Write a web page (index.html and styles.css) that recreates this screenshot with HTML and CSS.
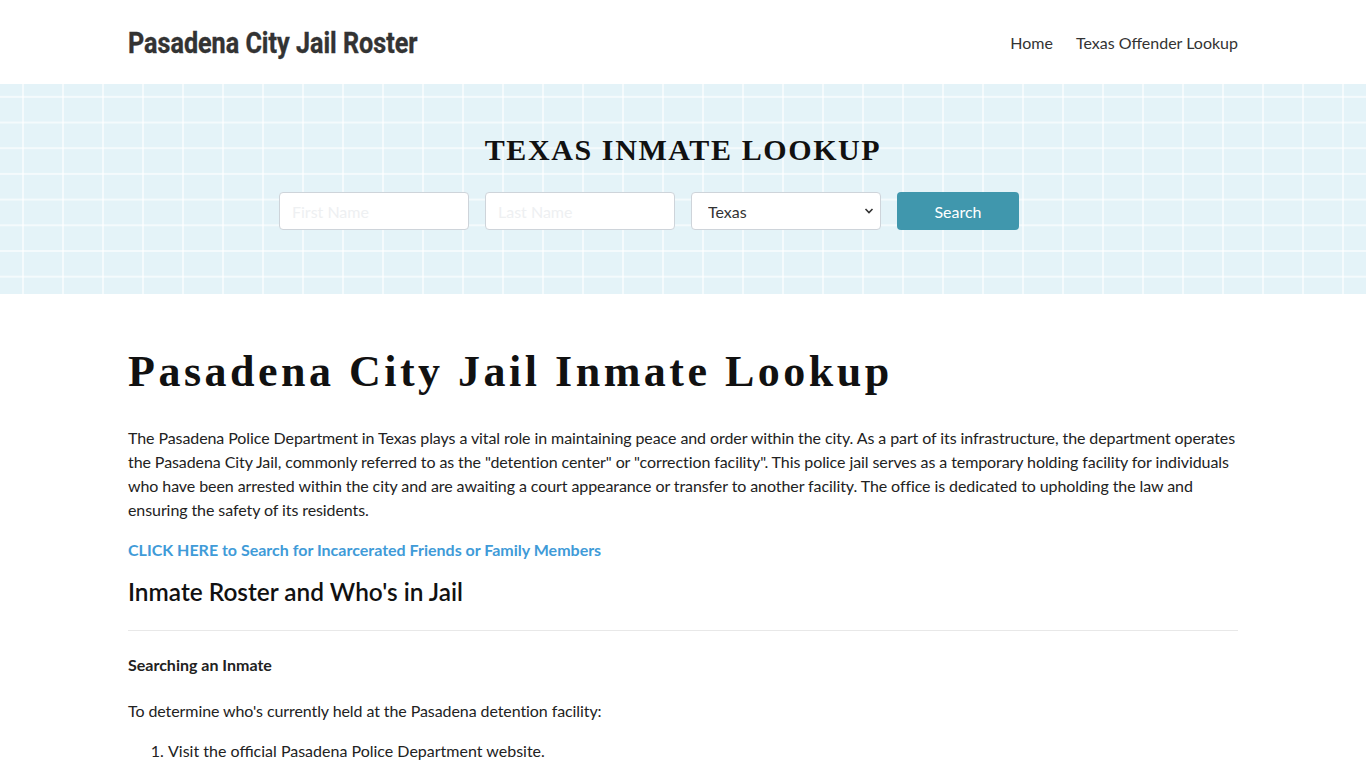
FILE: index.html
```
<!DOCTYPE html>
<html lang="en">
<head>
<meta charset="utf-8">
<title>Pasadena City Jail Roster</title>
<link rel="stylesheet" href="styles.css">
</head>
<body>
<header class="site-header">
  <div class="container header-inner">
    <a class="logo" href="#">Pasadena City Jail Roster</a>
    <nav class="nav">
      <a href="#">Home</a>
      <a href="#">Texas Offender Lookup</a>
    </nav>
  </div>
</header>
<section class="hero">
  <div class="container">
    <h2 class="hero-title">TEXAS INMATE LOOKUP</h2>
    <form class="search-form">
      <input type="text" class="field" placeholder="First Name">
      <input type="text" class="field" placeholder="Last Name">
      <select class="field select"><option>Texas</option></select>
      <button type="button" class="btn">Search</button>
    </form>
  </div>
</section>
<main class="container content">
  <h1 class="page-title">Pasadena City Jail Inmate Lookup</h1>
  <p class="body-text">The Pasadena Police Department in Texas plays a vital role in maintaining peace and order within the city. As a part of its infrastructure, the department operates the Pasadena City Jail, commonly referred to as the "detention center" or "correction facility". This police jail serves as a temporary holding facility for individuals who have been arrested within the city and are awaiting a court appearance or transfer to another facility. The office is dedicated to upholding the law and ensuring the safety of its residents.</p>
  <p><a class="cta" href="#">CLICK HERE to Search for Incarcerated Friends or Family Members</a></p>
  <h2 class="section-title">Inmate Roster and Who's in Jail</h2>
  <hr class="divider">
  <h3 class="sub-title">Searching an Inmate</h3>
  <p class="body-text">To determine who's currently held at the Pasadena detention facility:</p>
  <ol class="steps">
    <li>Visit the official Pasadena Police Department website.</li>
  </ol>
</main>
</body>
</html>
```

FILE: styles.css
```
* { box-sizing: border-box; }
body {
  margin: 0;
  font-family: Lato, "Open Sans", sans-serif;
  font-size: 16px;
  line-height: 24px;
  color: #222;
  background: #fff;
}
a { text-decoration: none; }
.container {
  width: 1110px;
  margin: 0 auto;
}
.site-header { height: 84px; background: #fff; }
.header-inner {
  height: 84px;
  display: flex;
  align-items: center;
  justify-content: space-between;
  padding-top: 2px;
}
.logo {
  display: inline-block;
  font-family: Roboto, "DejaVu Sans Condensed", sans-serif;
  font-weight: 700;
  font-size: 30px;
  line-height: 36px;
  color: #333;
  -webkit-text-stroke: 0.4px #333;
  transform: scaleX(0.838);
  transform-origin: left center;
}
.nav { display: flex; gap: 23px; }
.nav a { color: #333; font-size: 16px; }

.hero {
  height: 210px;
  background-color: #e4f3f8;
  background-image:
    linear-gradient(90deg, transparent 22px, rgba(255,255,255,0.6) 22px, rgba(255,255,255,0.6) 24px, transparent 24px),
    linear-gradient(180deg, transparent 12px, rgba(255,255,255,0.6) 12px, rgba(255,255,255,0.6) 14px, transparent 14px);
  background-size: 40px 100%, 100% 25.7px;
  background-position: 0 0, 0 0;
  padding-top: 48px;
}
.hero-title {
  margin: 0;
  text-align: center;
  font-family: "Liberation Serif", "DejaVu Serif", serif;
  font-weight: 700;
  font-size: 30px;
  line-height: 36px;
  letter-spacing: 1.6px;
  color: #111;
}
.search-form {
  margin-top: 24px;
  display: flex;
  justify-content: center;
  gap: 16px;
  padding-right: 68px;
}
.field {
  width: 190px;
  height: 38px;
  border: 1px solid #ced4da;
  border-radius: 4px;
  background: #fff;
  padding: 6px 12px;
  font-family: Lato, sans-serif;
  font-size: 16px;
  color: #333;
}
.field::placeholder { color: #eef0f2; }
.select {
  appearance: none;
  -webkit-appearance: none;
  padding-left: 16px;
  background-image: url("data:image/svg+xml,%3Csvg xmlns='http://www.w3.org/2000/svg' width='10' height='8' viewBox='0 0 10 8'%3E%3Cpath d='M1.5 2 L5 5.5 L8.5 2' fill='none' stroke='%23333' stroke-width='1.6'/%3E%3C/svg%3E");
  background-repeat: no-repeat;
  background-position: right 6px center;
}
.btn {
  width: 122px;
  height: 38px;
  border: 0;
  border-radius: 4px;
  background: #4097ad;
  color: #fff;
  font-family: Lato, sans-serif;
  font-size: 16px;
}

.content { padding-top: 52px; }
.page-title {
  margin: 0 0 28px;
  font-family: "Liberation Serif", "DejaVu Serif", serif;
  font-weight: 700;
  font-size: 44px;
  line-height: 52px;
  letter-spacing: 3.5px;
  color: #111;
}
.content p { margin: 0 0 16px; }
.body-text { letter-spacing: -0.085px; }
.cta { color: #3f9bd8; font-weight: 700; }
.section-title {
  margin: 0;
  font-size: 24.4px;
  line-height: 28px;
  font-weight: 600;
  color: #111;
}
.divider {
  margin: 24px 0 0;
  border: 0;
  border-top: 1px solid #e8e8e8;
}
.sub-title {
  margin: 22px 0 22px;
  font-size: 16px;
  line-height: 24px;
  font-weight: 700;
  color: #222;
}
.steps { margin: 0; padding-left: 40px; }
```
